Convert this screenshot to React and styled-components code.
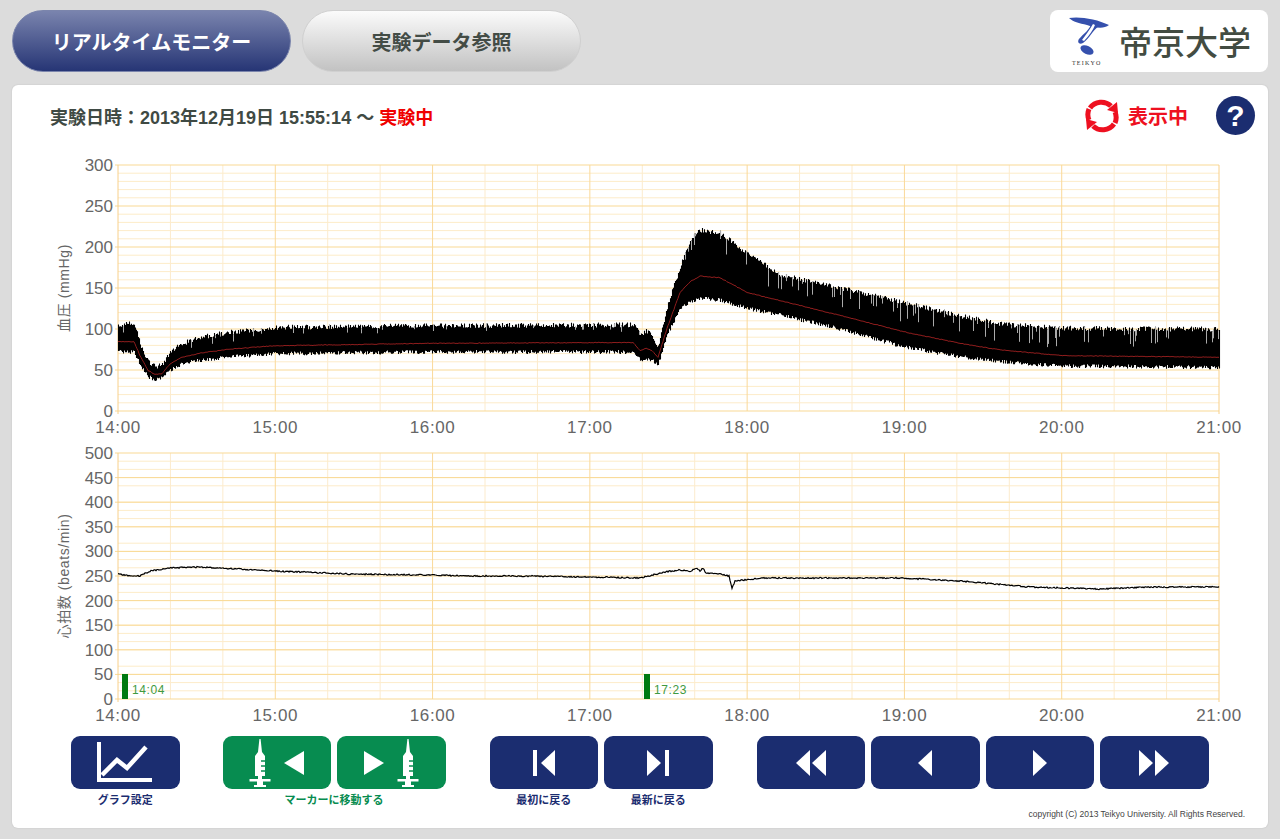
import React, { useMemo } from 'react';
import styled, { createGlobalStyle } from 'styled-components';

const SANS = `"Liberation Sans", "Noto Sans CJK JP", sans-serif`;
const CHART_FONT = `"Liberation Sans", "Noto Sans CJK JP", sans-serif`;

const GlobalStyle = createGlobalStyle`
  html, body {
    margin: 0;
    padding: 0;
    background: #dcdcdc;
    font-family: ${SANS};
  }
`;

const Page = styled.div`
  width: 1280px;
  height: 839px;
  overflow: hidden;
  background: #dcdcdc;
`;
const TopBar = styled.header`
  display: flex;
  align-items: flex-start;
  height: 62px;
  padding: 10px 12px 13px;
`;
const TabList = styled.nav`
  display: flex;
  gap: 11px;
`;
const Tab = styled.div`
  display: flex;
  align-items: center;
  justify-content: center;
  box-sizing: border-box;
  width: 279px;
  height: 62px;
  border-radius: 31px;
  font-size: 20px;
  font-weight: 700;
  color: ${(p) => (p.$active ? '#fff' : '#434c46')};
  background: ${(p) => (p.$active
    ? 'linear-gradient(#7a84ae, #263575)'
    : 'linear-gradient(#fbfbfb, #c2c2c2)')};
  border: 1px solid ${(p) => (p.$active ? '#7b85ac' : '#d0d0d0')};
`;
const LogoCard = styled.div`
  display: flex;
  align-items: center;
  width: 218px;
  height: 62px;
  margin-left: auto;
  border-radius: 8px;
  background: #fff;
`;
const LogoMark = styled.div`
  position: relative;
  width: 40px;
  height: 50px;
  margin: 0 10px 0 19px;
`;
const LogoCaption = styled.span`
  position: absolute;
  left: 3px;
  bottom: 0;
  font-family: "Liberation Serif", serif;
  font-size: 6px;
  letter-spacing: 1.2px;
  color: #333;
`;
const LogoName = styled.span`
  font-family: "Noto Sans CJK JP", sans-serif;
  font-size: 33px;
  font-weight: 500;
  letter-spacing: 0;
  color: #434c42;
`;
const Panel = styled.main`
  box-sizing: border-box;
  width: 1256px;
  height: 743px;
  margin: 0 12px;
  border-radius: 6px;
  background: #fff;
  box-shadow: 0 0 2px rgba(0, 0, 0, 0.12);
`;
const PanelHead = styled.div`
  display: flex;
  align-items: center;
  box-sizing: border-box;
  height: 70px;
  padding: 0 13px 9px 38px;
`;
const Heading = styled.h1`
  margin: 0;
  font-size: 18px;
  font-weight: 700;
  color: #3f4a44;
`;
const Live = styled.span`
  color: #f00000;
`;
const Status = styled.div`
  display: flex;
  align-items: center;
  gap: 8px;
  margin-left: auto;
  font-size: 20px;
  font-weight: 700;
  color: #ee1020;
`;
const HelpButton = styled.div`
  display: flex;
  align-items: center;
  justify-content: center;
  width: 39px;
  height: 39px;
  margin-left: 28px;
  border-radius: 50%;
  background: #1b2d70;
  color: #fff;
  font-size: 30px;
  font-weight: 700;
`;
const ChartSvg = styled.svg`
  display: block;
`;
const Toolbar = styled.div`
  display: flex;
  height: 72px;
  margin-top: 5px;
  padding-left: 59px;
`;
const ToolGroup = styled.div`
  display: flex;
  flex-direction: column;
  align-items: center;
  margin-left: ${(p) => p.$gap || 0}px;
`;
const ToolRow = styled.div`
  display: flex;
  gap: 6px;
`;
const ToolButton = styled.div`
  display: flex;
  align-items: center;
  justify-content: center;
  width: 108.5px;
  height: 53px;
  border-radius: 9px;
  background: ${(p) => (p.$green ? '#078c50' : '#1b2d70')};
`;
const ToolLabels = styled.div`
  display: flex;
  gap: 6px;
  margin-top: 4px;
`;
const ToolLabel = styled.span`
  min-width: 108.5px;
  text-align: center;
  font-size: 11px;
  line-height: 15px;
  font-weight: 700;
  color: ${(p) => (p.$green ? '#078c50' : '#1b2d70')};
`;
const Copyright = styled.div`
  padding-right: 23px;
  text-align: right;
  font-size: 8.5px;
  line-height: 12px;
  color: #444;
`;

const PLOT_LEFT = 106;
const PLOT_WIDTH = 1101;
const PLOT_HEIGHT = 246;
const PLOT_TOP = 10;
const HOURS = ['14:00', '15:00', '16:00', '17:00', '18:00', '19:00', '20:00', '21:00'];

// [x on the page, top of pulse, bottom of pulse, mean], all in mmHg
const PRESSURE = [
  [118, 104, 72, 85], [134, 108, 72, 85], [140, 82, 56, 68], [148, 60, 42, 50], [155, 54, 38, 45],
  [162, 56, 40, 46], [170, 72, 50, 58], [182, 82, 58, 66], [200, 90, 62, 71], [230, 96, 66, 76],
  [275, 102, 70, 80], [432, 104, 72, 83], [633, 105, 72, 84], [640, 93, 62, 74], [646, 98, 64, 77],
  [652, 92, 62, 74], [658, 78, 56, 66], [667, 127, 93, 101], [680, 176, 125, 145], [690, 208, 133, 158],
  [700, 221, 138, 165], [720, 217, 135, 163], [747, 192, 125, 145], [780, 166, 117, 135],
  [840, 150, 100, 117], [904, 132, 78, 97], [960, 116, 66, 83], [1000, 106, 60, 75], [1061, 101, 55, 68],
  [1140, 100, 54, 67], [1219, 100, 53, 66],
];

// [x on the page, y on the page]
const HEART = [
  [118, 574], [130, 576], [140, 576], [150, 571], [170, 568], [200, 567], [275, 571], [350, 574],
  [430, 575], [470, 576], [520, 576], [590, 577], [640, 578], [665, 572], [678, 570], [690, 571],
  [697, 568], [700, 571], [703, 568], [706, 573], [720, 574], [729, 576], [732, 588], [735, 581],
  [745, 580], [760, 578], [900, 578], [960, 581], [1030, 587], [1100, 589], [1150, 587], [1219, 587],
];

const makeRandom = (seed) => {
  let s = seed;
  return () => {
    s = (s * 1664525 + 1013904223) % 4294967296;
    return s / 4294967296;
  };
};

const sample = (table, x, col) => {
  let i = 0;
  while (i < table.length - 2 && table[i + 1][0] < x) i += 1;
  const a = table[i];
  const b = table[i + 1];
  return a[col] + ((b[col] - a[col]) * (x - a[0])) / (b[0] - a[0]);
};

function Grid({ max }) {
  const lines = [];
  const bottom = PLOT_TOP + PLOT_HEIGHT;
  const step = max / 30;
  for (let v = step; v < max; v += step) {
    const major = Math.round(v / step) % 5 === 0;
    if (!major) {
      const y = bottom - (v / max) * PLOT_HEIGHT;
      lines.push(<line key={`m${v}`} x1={PLOT_LEFT} x2={PLOT_LEFT + PLOT_WIDTH} y1={y} y2={y} stroke="#fdecc9" />);
    }
  }
  for (let i = 1; i < 21; i += 1) {
    const x = PLOT_LEFT + (i / 21) * PLOT_WIDTH;
    lines.push(<line key={`v${i}`} x1={x} x2={x} y1={PLOT_TOP} y2={bottom} stroke={i % 3 === 0 ? '#fad999' : '#fcebcd'} />);
  }
  for (let v = 0; v <= max; v += 50) {
    const y = bottom - (v / max) * PLOT_HEIGHT;
    lines.push(<line key={`h${v}`} x1={PLOT_LEFT - 3} x2={PLOT_LEFT + PLOT_WIDTH} y1={y} y2={y} stroke="#f9d995" />);
  }
  lines.push(<line key="left" x1={PLOT_LEFT} x2={PLOT_LEFT} y1={PLOT_TOP} y2={bottom + 3} stroke="#f8d08a" />);
  lines.push(<line key="right" x1={PLOT_LEFT + PLOT_WIDTH} x2={PLOT_LEFT + PLOT_WIDTH} y1={PLOT_TOP} y2={bottom + 3} stroke="#f8d08a" />);
  return lines;
}

function Axes({ max, title }) {
  const bottom = PLOT_TOP + PLOT_HEIGHT;
  const ticks = [];
  for (let v = 0; v <= max; v += 50) ticks.push(v);
  return (
    <g fontFamily={CHART_FONT} fontSize="17" fill="#666">
      {ticks.map((v) => (
        <text key={v} x={PLOT_LEFT - 5} y={bottom - (v / max) * PLOT_HEIGHT + 6} textAnchor="end">{v}</text>
      ))}
      {HOURS.map((h, i) => (
        <text key={h} x={PLOT_LEFT + (i * PLOT_WIDTH) / 7} y={bottom + 22} textAnchor="middle" letterSpacing="0.6">{h}</text>
      ))}
      <text
        transform={`translate(57 ${PLOT_TOP + PLOT_HEIGHT / 2}) rotate(-90)`}
        textAnchor="middle"
        fontSize="14"
        letterSpacing="0.6"
      >
        {title}
      </text>
    </g>
  );
}

function PressureTrace() {
  const { band, spikes, mean } = useMemo(() => {
    const rnd = makeRandom(77);
    const toY = (v) => PLOT_TOP + PLOT_HEIGHT - v * 0.82;
    let bandPath = '';
    let spikePath = '';
    let meanPath = '';
    for (let x = 118; x <= 1219; x += 1) {
      const px = x - 12;
      const top = toY(sample(PRESSURE, x, 1)) + rnd() * 5 - 2.5;
      const low = toY(sample(PRESSURE, x, 2)) + rnd() * 4 - 2;
      bandPath += `M${px + 0.5} ${top.toFixed(1)}V${low.toFixed(1)}`;
      if (rnd() < (x > 690 ? 0.13 : 0.05)) {
        const len = x > 690 ? 3 + rnd() * 16 : 2 + rnd() * 6;
        spikePath += `M${px + 0.5} ${top.toFixed(1)}v${len.toFixed(1)}`;
      }
      meanPath += `${meanPath ? 'L' : 'M'}${px} ${(toY(sample(PRESSURE, x, 3)) + rnd() * 0.7).toFixed(1)}`;
    }
    return { band: bandPath, spikes: spikePath, mean: meanPath };
  }, []);
  return (
    <g fill="none">
      <path d={band} stroke="#000" strokeWidth="1.1" />
      <path d={spikes} stroke="#aaa" strokeWidth="1" />
      <path d={mean} stroke="#8f1d1d" strokeWidth="1" />
    </g>
  );
}

function HeartTrace() {
  const d = useMemo(() => {
    const rnd = makeRandom(11);
    let path = '';
    for (let x = 118; x <= 1219; x += 1) {
      const y = sample(HEART, x, 1) - 443 + rnd() * 1.3 - 0.65;
      path += `${path ? 'L' : 'M'}${x - 12} ${y.toFixed(1)}`;
    }
    return path;
  }, []);
  return <path d={d} fill="none" stroke="#000" strokeWidth="1.2" />;
}

function Marker({ x, time }) {
  return (
    <g>
      <rect x={x} y={231} width={6} height={25} fill="#007a10" />
      <text x={x + 10} y={251} fontFamily={CHART_FONT} fontSize="12" letterSpacing="0.6" fill="#3f9a3f">{time}</text>
    </g>
  );
}

function Chart({ max, title, children }) {
  return (
    <ChartSvg width="1256" height="288" viewBox="0 0 1256 288">
      <Grid max={max} />
      <Axes max={max} title={title} />
      {children}
    </ChartSvg>
  );
}

function LogoIcon() {
  return (
    <svg width="40" height="42" viewBox="0 0 40 42">
      <path d="M0 2 C10 0 28 3 40 9 C34 14 24 11 18 9 C10 7 4 6 0 2Z" fill="#3550ad" />
      <path d="M23 6 C21 14 14 18 10 23 C8 26 10 29 14 27 C20 23 24 14 30 10Z" fill="#3550ad" />
      <path d="M26 9 C24 14 20 20 15 25 L13 24 C17 19 21 13 24 8Z" fill="#fff" />
      <ellipse cx="18" cy="34" rx="7" ry="4" fill="#3550ad" transform="rotate(25 18 34)" />
    </svg>
  );
}

function RefreshIcon() {
  return (
    <svg width="36" height="36" viewBox="0 0 36 36" fill="none">
      <path d="M27 8 A14 14 0 0 0 6 10" stroke="#ee1020" strokeWidth="5" />
      <path d="M9 28 A14 14 0 0 0 30 26" stroke="#ee1020" strokeWidth="5" />
      <path d="M5 22 A14 14 0 0 1 5 11" stroke="#ee1020" strokeWidth="5" />
      <path d="M31 14 A14 14 0 0 1 31 25" stroke="#ee1020" strokeWidth="5" />
      <path d="M23 12 L34 15 L33 4Z" fill="#ee1020" />
      <path d="M13 24 L2 21 L3 32Z" fill="#ee1020" />
    </svg>
  );
}

function GraphIcon() {
  return (
    <svg width="56" height="42" viewBox="0 0 56 42" fill="none" stroke="#fff">
      <path d="M2 0 V38 H55" strokeWidth="4" />
      <path d="M5 33 L20 18 L30 26 L49 5" strokeWidth="4.5" />
    </svg>
  );
}

function Syringe() {
  return (
    <svg width="22" height="48" viewBox="0 0 22 48" fill="#fff">
      <path d="M10.4 0 L11.6 0 L13 13 L16 17 L16 37 L13 37 L13 40 L21.5 40 L21.5 42.5 L14 42.5 L14 46 L17 46 L17 48 L5 48 L5 46 L8 46 L8 42.5 L0.5 42.5 L0.5 40 L9 40 L9 37 L6 37 L6 17 L9 13Z" />
      <path d="M12 22 H16 M12 27 H16 M12 32 H16" stroke="#078c50" strokeWidth="1.4" />
    </svg>
  );
}

const Glyph = styled.svg`
  display: block;
  margin: ${(p) => p.$margin || '0'};
`;

function Arrow({ dir, bar, twin, size = 26 }) {
  const w = 14;
  const single = dir === 'left' ? `M${w} 0 V${size} L0 ${size / 2}Z` : `M0 0 V${size} L${w} ${size / 2}Z`;
  const width = twin ? w * 2 + 2 : bar ? w + 8 : w;
  const shift = dir === 'left' ? (bar ? 8 : 0) : 0;
  return (
    <Glyph width={width} height={size} viewBox={`0 0 ${width} ${size}`} fill="#fff">
      <path d={single} transform={`translate(${shift} 0)`} />
      {twin && <path d={single} transform={`translate(${w + 2} 0)`} />}
      {bar && <rect x={dir === 'left' ? 0 : w + 4} y={0} width={4} height={size} />}
    </Glyph>
  );
}

function Triangle({ dir }) {
  const path = dir === 'left' ? 'M20 0 V24 L0 12Z' : 'M0 0 V24 L20 12Z';
  return (
    <Glyph width="20" height="24" viewBox="0 0 20 24" fill="#fff" $margin={dir === 'left' ? '0 0 0 13px' : '0 13px 0 0'}>
      <path d={path} />
    </Glyph>
  );
}

export default function App() {
  return (
    <Page>
      <GlobalStyle />
      <TopBar>
        <TabList>
          <Tab $active>リアルタイムモニター</Tab>
          <Tab>実験データ参照</Tab>
        </TabList>
        <LogoCard>
          <LogoMark>
            <LogoIcon />
            <LogoCaption>TEIKYO</LogoCaption>
          </LogoMark>
          <LogoName>帝京大学</LogoName>
        </LogoCard>
      </TopBar>
      <Panel>
        <PanelHead>
          <Heading>
            実験日時：2013年12月19日 15:55:14 〜 <Live>実験中</Live>
          </Heading>
          <Status>
            <RefreshIcon />
            表示中
          </Status>
          <HelpButton>?</HelpButton>
        </PanelHead>
        <Chart max={300} title="血圧 (mmHg)">
          <PressureTrace />
        </Chart>
        <Chart max={500} title="心拍数 (beats/min)">
          <HeartTrace />
          <Marker x={110} time="14:04" />
          <Marker x={632} time="17:23" />
        </Chart>
        <Toolbar>
          <ToolGroup>
            <ToolButton><GraphIcon /></ToolButton>
            <ToolLabels><ToolLabel>グラフ設定</ToolLabel></ToolLabels>
          </ToolGroup>
          <ToolGroup $gap={43}>
            <ToolRow>
              <ToolButton $green><Syringe /><Triangle dir="left" /></ToolButton>
              <ToolButton $green><Triangle dir="right" /><Syringe /></ToolButton>
            </ToolRow>
            <ToolLabels><ToolLabel $green>マーカーに移動する</ToolLabel></ToolLabels>
          </ToolGroup>
          <ToolGroup $gap={44}>
            <ToolRow>
              <ToolButton><Arrow dir="left" bar /></ToolButton>
              <ToolButton><Arrow dir="right" bar /></ToolButton>
            </ToolRow>
            <ToolLabels>
              <ToolLabel>最初に戻る</ToolLabel>
              <ToolLabel>最新に戻る</ToolLabel>
            </ToolLabels>
          </ToolGroup>
          <ToolGroup $gap={44}>
            <ToolRow>
              <ToolButton><Arrow dir="left" twin /></ToolButton>
              <ToolButton><Arrow dir="left" /></ToolButton>
              <ToolButton><Arrow dir="right" /></ToolButton>
              <ToolButton><Arrow dir="right" twin /></ToolButton>
            </ToolRow>
          </ToolGroup>
        </Toolbar>
        <Copyright>copyright (C) 2013 Teikyo University. All Rights Reserved.</Copyright>
      </Panel>
    </Page>
  );
}
